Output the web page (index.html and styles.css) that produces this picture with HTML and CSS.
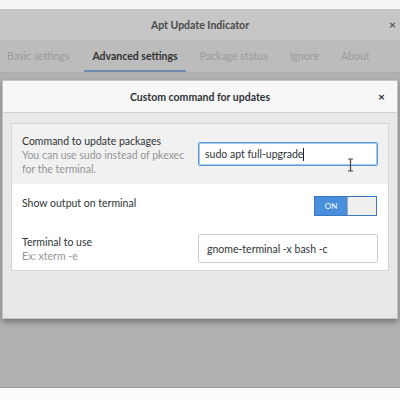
FILE: index.html
```html
<!DOCTYPE html>
<html>
<head>
<meta charset="utf-8">
<link rel="stylesheet" href="styles.css">
</head>
<body>
<div class="topstrip"></div>
<div class="backdrop">
  <div class="pheader">
    <span class="ptitle">Apt Update Indicator</span>
    <span class="pclose">×</span>
  </div>
  <div class="tabs">
    <span class="tab t1">Basic settings</span>
    <span class="tab active">Advanced settings</span>
    <span class="tab t3">Package status</span>
    <span class="tab t4">Ignore</span>
    <span class="tab t5">About</span>
  </div>
  <div class="dialog">
    <div class="dheader">
      <span class="dtitle">Custom command for updates</span>
      <span class="dclose">×</span>
    </div>
    <div class="dcontent">
      <div class="listbox">
        <div class="row row1">
          <div class="labels">
            <div class="lbl">Command to update packages</div>
            <div class="sub">You can use sudo instead of pkexec<br>for the terminal.</div>
          </div>
          <div class="entry focus">sudo apt full-upgrade<span class="caret"></span></div>
          <svg class="ibeam" width="7" height="14" viewBox="0 0 7 14"><path d="M1 1h5M3.5 1v12M1 13h5" stroke="#444" stroke-width="1.2" fill="none"/></svg>
        </div>
        <div class="row row2">
          <div class="labels"><div class="lbl">Show output on terminal</div></div>
          <div class="switch"><span class="on">ON</span><span class="knob"></span></div>
        </div>
        <div class="row row3">
          <div class="labels">
            <div class="lbl">Terminal to use</div>
            <div class="sub">Ex: xterm -e</div>
          </div>
          <div class="entry">gnome-terminal -x bash -c</div>
        </div>
      </div>
    </div>
  </div>
</div>
<div class="bottomstrip"></div>
</body>
</html>
```

FILE: styles.css
```css
html, body {
  margin: 0;
  padding: 0;
  background: #ffffff;
  font-family: "Lato", "Open Sans", sans-serif;
  font-size: 10.5px;
  color: #2e3436;
  width: 400px;
  height: 400px;
  overflow: hidden;
  white-space: nowrap;
}
.topstrip {
  height: 9px;
  background: #f4f4f4;
}
.backdrop {
  background: #b1b1b1;
  height: 378px;
  border-bottom: 1px solid #9c9c9c;
  position: relative;
}
.pheader {
  height: 31px;
  background: #c6c6c6;
  display: flex;
  align-items: center;
  justify-content: center;
  position: relative;
}
.ptitle {
  color: #4a4a4a;
  font-weight: bold;
}
.pclose {
  position: absolute;
  right: 4px;
  top: 8px;
  font-size: 12px;
  color: #555;
  font-weight: bold;
}
.tabs {
  height: 32px;
  background: #bcbcbc;
  display: flex;
  align-items: center;
  color: #9a9a9a;
  border-bottom: 1px solid #aaa;
}
.t1 { margin-left: 7px; }
.active {
  margin-left: 15px;
  color: #333;
  font-weight: bold;
  height: 32px;
  line-height: 32px;
  box-sizing: border-box;
  border-bottom: 2px solid #6d8aac;
  padding: 0 8px;
}
.t3 { margin-left: 14px; }
.t4 { margin-left: 22px; }
.t5 { margin-left: 22px; }
.dialog {
  margin: 7px 2px 0 2px;
  background: #e8e8e7;
  box-shadow: 0 3px 6px rgba(0,0,0,0.35);
  border: 1px solid #c4c4c4;
}
.dheader {
  height: 31px;
  background: #f7f7f7;
  border-bottom: 1px solid #cfcfcf;
  display: flex;
  align-items: center;
  justify-content: center;
  position: relative;
}
.dtitle {
  font-weight: bold;
  color: #2e3436;
}
.dclose {
  position: absolute;
  right: 12px;
  top: 8px;
  font-size: 12px;
  font-weight: bold;
  color: #333;
}
.dcontent {
  padding: 10px 8px 47px 8px;
}
.listbox {
  background: #fff;
  border: 1px solid #d6d6d6;
}
.row {
  display: flex;
  align-items: center;
  justify-content: space-between;
  padding: 0 10px 0 10px;
  position: relative;
}
.row1 {
  height: 60px;
  background: #f1f1f1;
}
.row2 {
  height: 43px;
}
.row3 {
  height: 43px;
}
.lbl {
  color: #2e3436;
  line-height: 14px;
}
.sub {
  color: #929595;
  line-height: 14px;
}
.row1 .labels { margin-top: 2px; }
.row2 .labels { margin-top: -5px; }
.entry {
  width: 180px;
  height: 29px;
  box-sizing: border-box;
  border: 1px solid #cdcdcd;
  border-radius: 2px;
  background: #fff;
  padding-left: 8px;
  display: flex;
  align-items: center;
  color: #2e3436;
}
.entry.focus {
  height: 24px;
  border-color: #5a98dc;
  box-shadow: inset 0 0 0 1px #a9c9ec;
  padding-left: 6px;
}
.caret {
  display: inline-block;
  width: 1px;
  height: 13px;
  background: #222;
}
.ibeam {
  position: absolute;
  left: 335px;
  top: 34px;
}
.switch {
  width: 63px;
  height: 20px;
  box-sizing: border-box;
  border: 1px solid #3b78bd;
  display: flex;
  margin-right: 1px;
}
.on {
  width: 32px;
  background: #4a8fdb;
  color: #fff;
  font-size: 8px;
  display: flex;
  align-items: center;
  justify-content: center;
}
.knob {
  flex: 1;
  background: #efefef;
  border-left: 1px solid #9fa9b5;
}
.bottomstrip {
  height: 12px;
  background: #fbfbfb;
}
```
